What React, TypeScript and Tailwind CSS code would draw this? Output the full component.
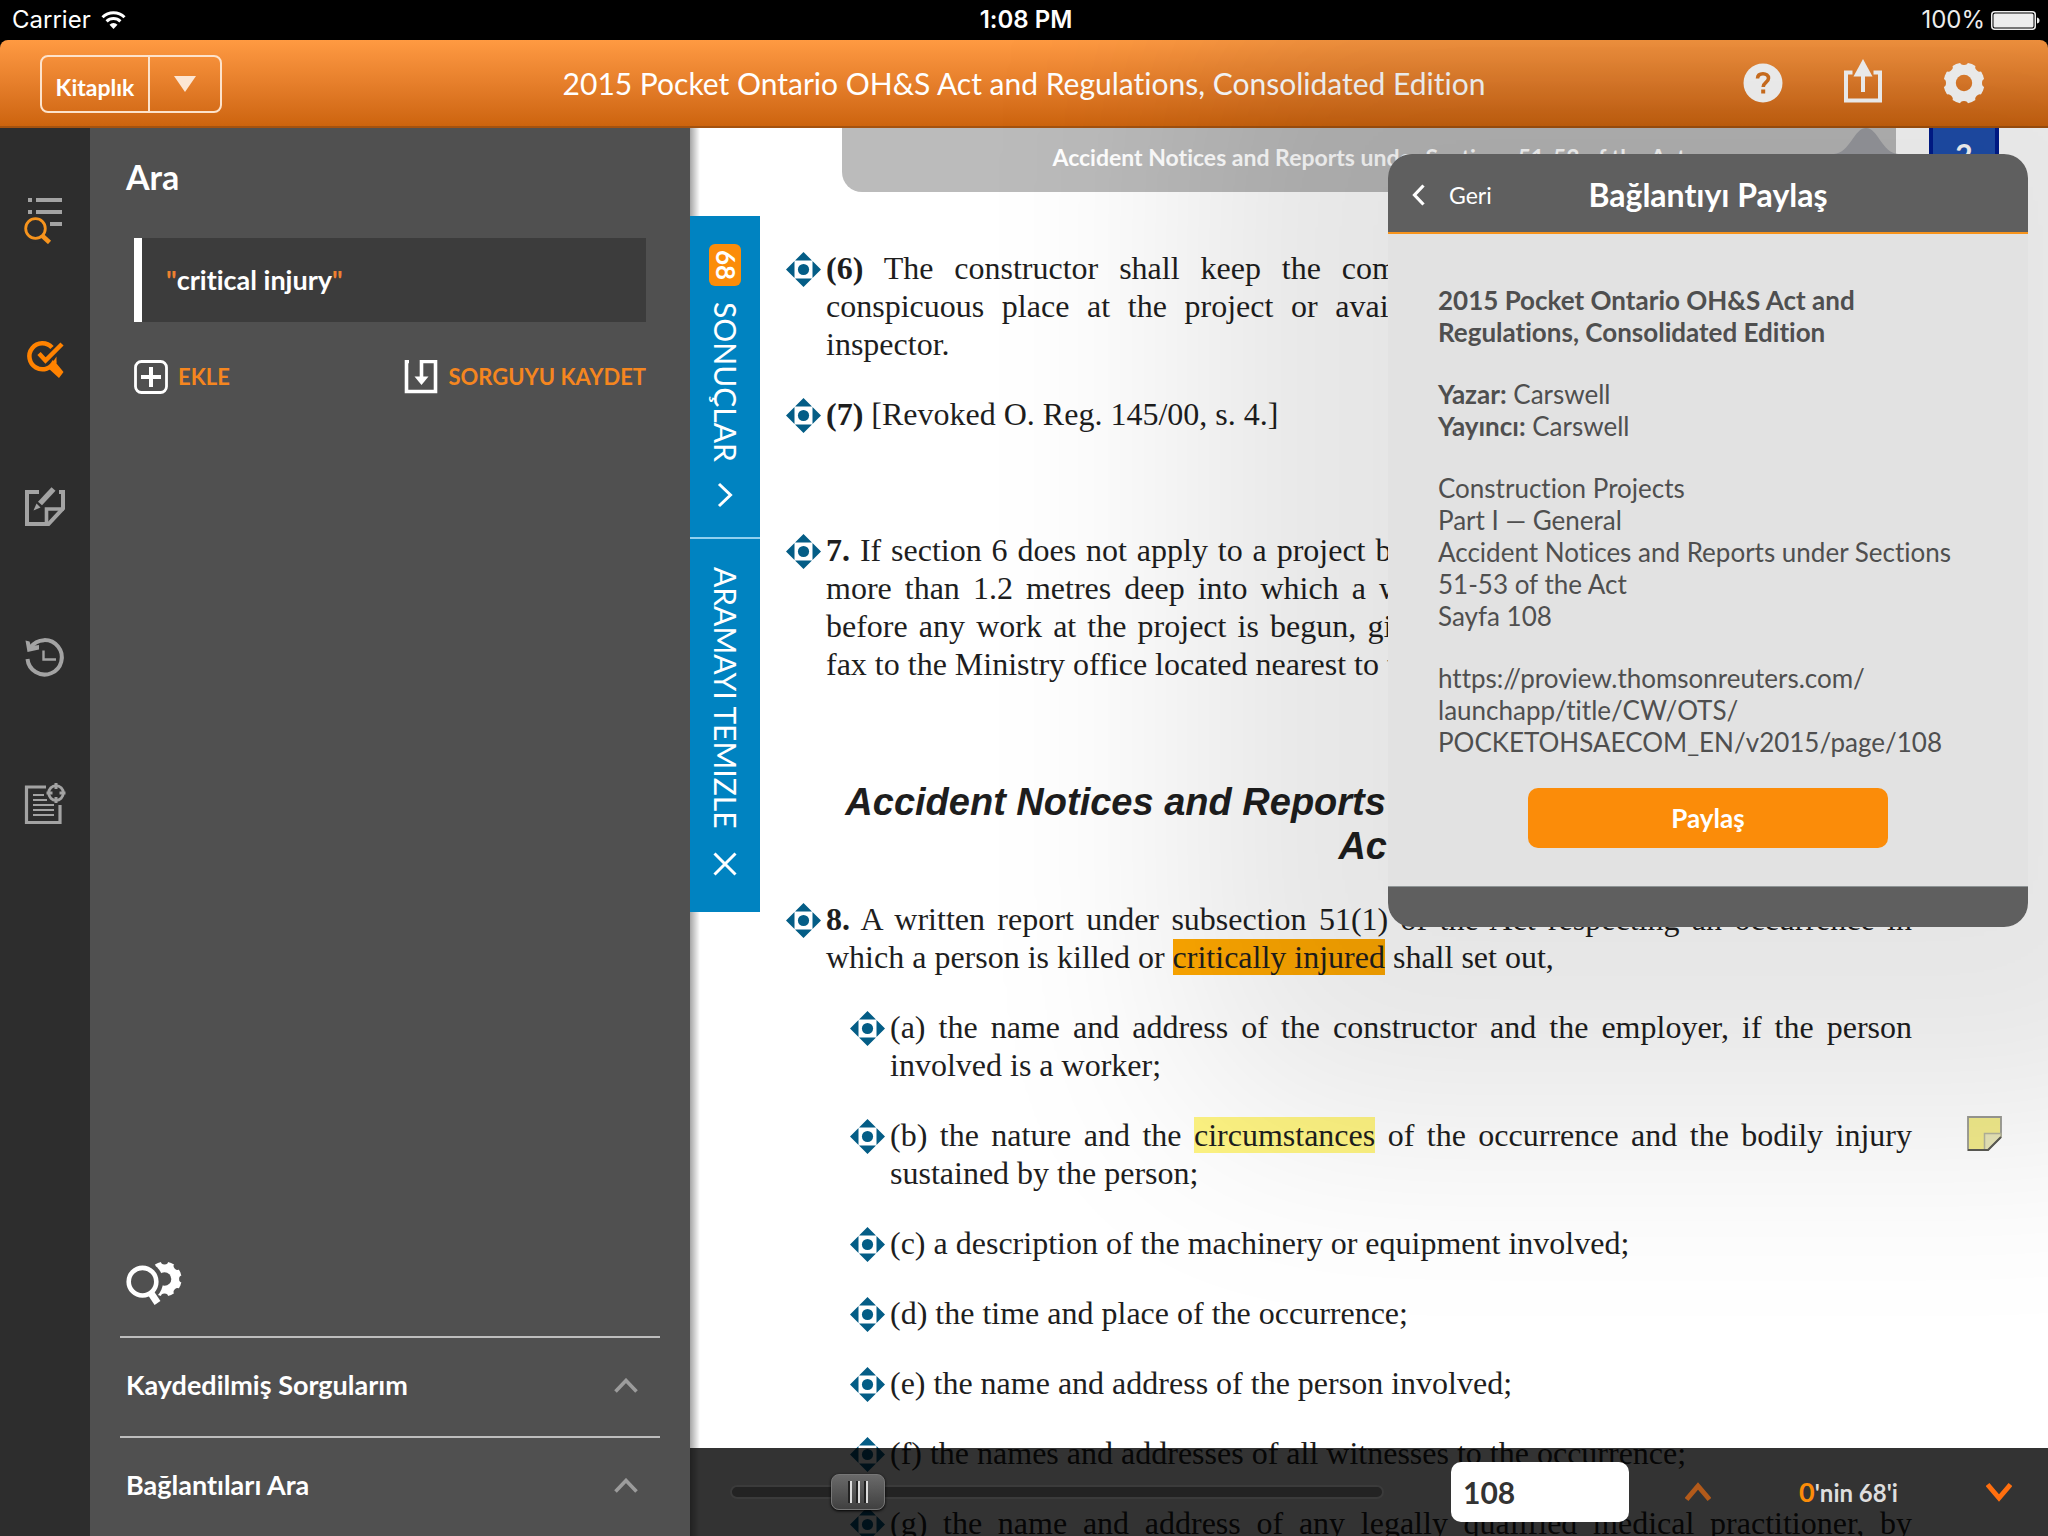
import type { ReactNode } from "react";
import { useState } from "react";
import clsx from "clsx";

function StatusBar() {
  return (
    <div className="grid h-10 shrink-0 grid-cols-3 items-center bg-black pr-2 pl-3 font-['Inter',sans-serif] text-2xl leading-8 text-white">
      <div className="flex items-center gap-2.5">
        <span>Carrier</span>
        <svg width="25" height="18" viewBox="0 0 25 18" fill="none">
          <path d="M1.5 6.2a15.6 15.6 0 0 1 22 0" stroke="#fff" strokeWidth="3" />
          <path d="M5.6 10.4a9.8 9.8 0 0 1 13.8 0" stroke="#fff" strokeWidth="3" />
          <path d="M12.5 18l-4-4.3a5.8 5.8 0 0 1 8 0z" fill="#fff" />
        </svg>
      </div>
      <p className="text-center font-semibold">1:08 PM</p>
      <div className="flex items-center justify-end gap-1.5">
        <span>100%</span>
        <svg width="49" height="19" viewBox="0 0 49 19" fill="none">
          <rect x="0.75" y="0.75" width="43.5" height="17.5" rx="3" stroke="#fff" strokeWidth="1.5" />
          <rect x="2.5" y="2.5" width="40" height="14" rx="1.5" fill="#fff" />
          <path d="M46 6.5c2 .5 2.5 1.5 2.5 3s-.5 2.5-2.5 3z" fill="#fff" />
        </svg>
      </div>
    </div>
  );
}

// Disc with eight notches round the rim and a hole in the middle
function GearIcon() {
  return (
    <svg width="42" height="42" viewBox="-21 -21 42 42">
      <mask id="gear-cut">
        <circle r="20.5" fill="#fff" />
        <circle r="8.2" fill="#000" />
        {[0, 45, 90, 135, 180, 225, 270, 315].map((deg) => (
          <ellipse key={deg} cy="-21.2" rx="4" ry="3.2" fill="#000" transform={`rotate(${deg})`} />
        ))}
      </mask>
      <rect x="-21" y="-21" width="42" height="42" fill="currentColor" mask="url(#gear-cut)" />
    </svg>
  );
}

function TopBar() {
  return (
    <div className="shrink-0 bg-black">
      <header className="grid h-[88px] grid-cols-[1fr_auto_1fr] items-center rounded-t-lg border-b-2 border-[#a4520f] bg-linear-to-b from-[#ff9a42] to-[#cd640d] px-10">
        <div className="mt-0.5 flex h-[58px] w-[182px] rounded-lg border-2 border-[#fde3cc] text-white">
          <button type="button" className="w-[106px] pt-1.5 text-[23px] font-bold">
            Kitaplık
          </button>
          <button
            type="button"
            aria-label="Kitaplık menüsü"
            className="flex flex-1 items-center justify-center border-l-2 border-[#fde3cc]"
          >
            <svg width="22" height="16" viewBox="0 0 22 16">
              <path d="M0 0h22L11 16z" fill="#fce6d4" />
            </svg>
          </button>
        </div>

        <h1 className="text-[30px] text-white">
          2015 Pocket Ontario OH&amp;S Act and Regulations, Consolidated Edition
        </h1>

        <div className="flex items-center justify-end gap-[60px] pr-[23px] text-white">
          <button type="button" aria-label="Yardım">
            <svg width="40" height="40" viewBox="0 0 40 40" fill="none">
              <circle cx="20" cy="20" r="19.5" fill="currentColor" />
              <path
                d="M14.5 15.5c.2-3.2 2.4-4.7 5.5-4.7s5.5 1.7 5.5 4.5c0 4.2-5.3 4-5.3 8.7"
                stroke="#d87420"
                strokeWidth="3.6"
              />
              <rect x="18.2" y="26.5" width="4" height="4" fill="#d87420" />
            </svg>
          </button>
          <button type="button" aria-label="Paylaş">
            <svg width="40" height="48" viewBox="0 0 40 48" fill="none">
              <path d="M9.5 13.5H3v28h34v-28h-6.5" stroke="currentColor" strokeWidth="4" />
              <path d="M20 33V14" stroke="currentColor" strokeWidth="4" />
              <path d="M20 0l9.5 17.5h-19z" fill="currentColor" />
            </svg>
          </button>
          <button type="button" aria-label="Ayarlar">
            <GearIcon />
          </button>
        </div>
      </header>
    </div>
  );
}

function RailButton({ label, children }: { label: string; children: ReactNode }) {
  return (
    <button
      type="button"
      aria-label={label}
      className="flex h-[147px] items-center justify-center text-[#a3a3a3]"
    >
      <svg width="48" height="60" viewBox="0 0 48 60" fill="none">
        {children}
      </svg>
    </button>
  );
}

function Rail() {
  return (
    <nav className="flex w-[90px] shrink-0 flex-col bg-[#2d2d2d] pt-3">
      <RailButton label="İçindekiler">
        <path d="M7 16h4M15 16h26M7 28h4M15 28h26M29 40h12" stroke="currentColor" strokeWidth="4" />
        <circle cx="15" cy="45" r="13.5" fill="#2d2d2d" />
        <circle cx="14.5" cy="44.5" r="9.8" stroke="#f7941d" strokeWidth="2.8" />
        <path d="M21 51.5l7.5 7" stroke="#f7941d" strokeWidth="4.5" />
      </RailButton>
      <RailButton label="Ara">
        <path d="M31 16.5A13 13 0 1 0 33.5 30" stroke="#ff8200" strokeWidth="4.5" />
        <path d="M18 22.5l6.5 7L41 13" stroke="#ff8200" strokeWidth="4.5" />
        <path d="M35.5 25.5v7l7 8.5-4.5 6-10.5-9.5z" fill="#ff8200" />
      </RailButton>
      <RailButton label="Notlar">
        <path d="M18 14H6v32h21.5L42 30.5V14h-4" stroke="currentColor" strokeWidth="4" />
        <path d="M25.5 47V31H43" stroke="currentColor" strokeWidth="3.6" />
        <path d="M32.5 11L19 25.5" stroke="currentColor" strokeWidth="5.5" />
        <path d="M15.5 25.5l4 4-7 3z" fill="currentColor" />
      </RailButton>
      <RailButton label="Geçmiş">
        <path d="M9.5 22.5A17.2 17.2 0 1 1 6.5 34" stroke="currentColor" strokeWidth="4" />
        <path d="M4.5 15.5l4 1 1.5 4.5 8-1v4.5L6.5 27z" fill="currentColor" />
        <path d="M22.5 25.5v9H35" stroke="currentColor" strokeWidth="2.4" />
      </RailButton>
      <RailButton label="Belge">
        <path d="M25 15H5.5v35.5H39V33" stroke="currentColor" strokeWidth="3.2" />
        <path
          d="M12 23h11M12 28h14M12 33h21M12 38h21M12 43h21"
          stroke="currentColor"
          strokeWidth="2"
        />
        <circle cx="35" cy="21" r="7.3" stroke="currentColor" strokeWidth="2.8" />
        <path d="M35 11v6M35 25v6M25.5 21h6M38.5 21h6" stroke="currentColor" strokeWidth="3" />
      </RailButton>
    </nav>
  );
}

function SectionRow({ label }: { label: string }) {
  return (
    <button
      type="button"
      className="flex h-[100px] w-full items-center justify-between border-t-2 border-[#bdbdbd] pr-[22px] pb-1 pl-1.5 text-[27px] font-bold text-white"
    >
      {label}
      <svg width="24" height="15" viewBox="0 0 24 15" fill="none">
        <path d="M1.5 13.5L12 2.5l10.5 11" stroke="#9c9c9c" strokeWidth="3.6" />
      </svg>
    </button>
  );
}

function SearchPanel() {
  return (
    <aside className="flex w-[600px] shrink-0 flex-col bg-[#505050]">
      <div className="px-[44px] pt-[27px]">
        <h2 className="-ml-2 text-[34px] leading-[44px] font-bold text-white">Ara</h2>
        <div className="mt-[39px] flex h-[84px] items-center border-l-8 border-white bg-[#3c3c3c] pl-6 text-[27px] font-bold text-white">
          <span className="text-[#ee8030]">"</span>critical injury
          <span className="text-[#ee8030]">"</span>
        </div>
        <div className="mt-[37px] flex items-center justify-between text-[22px] leading-9 font-bold text-[#f5861f]">
          <button type="button" className="flex items-center gap-2.5">
            <svg width="34" height="34" viewBox="0 0 34 34" fill="none">
              <rect x="1.5" y="1.5" width="31" height="31" rx="6" stroke="#fff" strokeWidth="2.8" />
              <path d="M17 7v20M7 17h20" stroke="#fff" strokeWidth="4" />
            </svg>
            EKLE
          </button>
          <button type="button" className="flex items-center gap-2.5">
            <svg width="34" height="34" viewBox="0 0 34 34" fill="none">
              <path d="M5 1.5H2.5v30h29v-30H17.5V18" stroke="#fff" strokeWidth="3.6" />
              <path d="M10.5 16.5h14L17.5 25z" fill="#fff" />
            </svg>
            SORGUYU KAYDET
          </button>
        </div>
      </div>

      <div className="mt-auto px-[30px]">
        <button type="button" aria-label="Arama ayarları" className="mb-[29px] ml-1.5 block">
          <svg width="56" height="46" viewBox="0 0 56 46" fill="none">
            <mask id="search-gear-cut">
              <circle cx="38.5" cy="18" r="17.2" fill="#fff" />
              <circle cx="38.5" cy="18" r="6.8" fill="#000" />
              <circle cx="16.5" cy="20.7" r="20.5" fill="#000" />
              {[0, 45, 90, 135, 180, 315].map((deg) => (
                <ellipse
                  key={deg}
                  cx="38.5"
                  cy="0.2"
                  rx="3.6"
                  ry="3.2"
                  fill="#000"
                  transform={`rotate(${deg} 38.5 18)`}
                />
              ))}
            </mask>
            <rect width="56" height="46" fill="#fff" mask="url(#search-gear-cut)" />
            <circle cx="16.5" cy="20.7" r="13.8" stroke="#fff" strokeWidth="4.6" />
            <path d="M24.5 31.5l7 10.5" stroke="#fff" strokeWidth="7" />
          </svg>
        </button>
        <SectionRow label="Kaydedilmiş Sorgularım" />
        <SectionRow label="Bağlantıları Ara" />
      </div>
    </aside>
  );
}

function Marker() {
  return (
    <svg className="mt-[3px] shrink-0" width="35" height="35" viewBox="0 0 35 35" fill="#045d86">
      <path d="M17.5 0l8.5 8.5H9zM17.5 35L9 26.5h17zM0 17.5L8.5 9v17zM35 17.5L26.5 26V9z" />
      <circle cx="17.5" cy="17.5" r="5.6" />
    </svg>
  );
}

function Clause({
  nested,
  note,
  children,
}: {
  nested?: boolean;
  note?: boolean;
  children: ReactNode;
}) {
  return (
    <div className={clsx("relative flex gap-[5px]", nested && "ml-16")}>
      <Marker />
      <p className="flex-1 text-justify">{children}</p>
      {note && (
        <svg
          className="absolute top-0 -right-[90px]"
          width="35"
          height="35"
          viewBox="0 0 35 35"
          fill="none"
        >
          <path d="M1 1h33v20L21 34H1z" fill="#f3ec8c" stroke="#9a9a94" strokeWidth="1.8" />
          <path d="M17.5 34V17.5H34V21L21 34z" fill="#e9e6b8" stroke="#b5b59c" strokeWidth="1.5" />
          <path d="M34 21L21 34H1" stroke="#5b5b55" strokeWidth="2" />
        </svg>
      )}
    </div>
  );
}

function Document() {
  return (
    <article className="flex flex-col gap-8 pt-[121px] pr-[136px] pl-24 font-['Liberation_Serif',serif] text-[32px] leading-[38px] text-[#1e1e1e]">
      <Clause>
        <b>(6)</b> The constructor shall keep the completed notification form posted in a
        conspicuous place at the project or available at the project for review by an inspector.
      </Clause>
      <Clause>
        <b>(7)</b> [Revoked O. Reg. 145/00, s. 4.]
      </Clause>
      <div className="pt-[66px]">
        <Clause>
          <b>7.</b> If section 6 does not apply to a project but the project includes work on a
          trench more than 1.2 metres deep into which a worker may enter, the constructor shall,
          before any work at the project is begun, give notice in person, by telephone or by fax to
          the Ministry office located nearest to the project.
        </Clause>
      </div>
      <h3 className="pt-[65px] pl-10 text-center font-['Liberation_Sans',sans-serif] text-[38px] leading-[44px] font-bold italic">
        Accident Notices and Reports under Sections 51-53 of the Act
      </h3>
      <Clause>
        <b>8.</b> A written report under subsection 51(1) of the Act respecting an occurrence in
        which a person is killed or <mark className="bg-[#ffa800] text-inherit">critically injured</mark>{" "}
        shall set out,
      </Clause>
      <Clause nested>
        (a) the name and address of the constructor and the employer, if the person involved is a
        worker;
      </Clause>
      <Clause nested note>
        (b) the nature and the <mark className="bg-[#fff583] text-inherit">circumstances</mark> of
        the occurrence and the bodily injury sustained by the person;
      </Clause>
      <Clause nested>(c) a description of the machinery or equipment involved;</Clause>
      <Clause nested>(d) the time and place of the occurrence;</Clause>
      <Clause nested>(e) the name and address of the person involved;</Clause>
      <Clause nested>(f) the names and addresses of all witnesses to the occurrence;</Clause>
      <Clause nested>
        (g) the name and address of any legally qualified medical practitioner, by whom the worker
        was or is being attended for the injury; and
      </Clause>
    </article>
  );
}

function SideTabs() {
  return (
    <div className="absolute top-[88px] left-0 flex w-[70px] flex-col bg-[#0083c1] text-[30px] text-white">
      <button
        type="button"
        className="flex h-[323px] flex-col items-center border-b-2 border-[#8fd0f0] pt-7"
      >
        <span className="flex h-[42px] w-8 items-center justify-center rounded-md bg-[#fb8c09] text-[26px] font-bold [writing-mode:vertical-rl]">
          68
        </span>
        <span className="mt-4 [writing-mode:vertical-rl]">SONUÇLAR</span>
        <svg className="mt-5" width="16" height="26" viewBox="0 0 16 26" fill="none">
          <path d="M2 2l11.5 11L2 24" stroke="#fff" strokeWidth="3" />
        </svg>
      </button>
      <button type="button" className="flex h-[373px] flex-col items-center pt-7">
        <span className="[writing-mode:vertical-rl]">ARAMAYI TEMIZLE</span>
        <svg className="mt-6" width="24" height="24" viewBox="0 0 24 24" fill="none">
          <path d="M1.5 1.5l21 21M22.5 1.5l-21 21" stroke="#fff" strokeWidth="3" />
        </svg>
      </button>
    </div>
  );
}

function SharePopover() {
  return (
    <section
      aria-label="Bağlantıyı Paylaş"
      className="absolute top-[26px] right-5 w-[640px] rounded-[24px] shadow-[0_0_220px_200px_rgba(0,0,0,0.1)]"
    >
      <svg
        className="absolute -top-[26px] right-[130px]"
        width="64"
        height="26"
        viewBox="0 0 64 26"
      >
        <path d="M0 26C16 25 20 0 32 0s16 25 32 26z" fill="#8c8d92" />
      </svg>
      <header className="grid h-20 grid-cols-[1fr_auto_1fr] items-center rounded-t-[24px] border-b-2 border-[#f7941d] bg-[#5f5f5f] px-6 pt-1 text-white">
        <button type="button" className="flex items-center gap-6 text-[23px]">
          <svg width="13" height="22" viewBox="0 0 13 22" fill="none">
            <path d="M11.5 1.5L2.5 11l9 9.5" stroke="#fff" strokeWidth="3.2" />
          </svg>
          Geri
        </button>
        <h2 className="text-[32px] font-bold">Bağlantıyı Paylaş</h2>
      </header>
      <div className="flex h-[652px] flex-col gap-[30px] bg-[#e2e2e2] px-[50px] pt-[50px] text-[26px] leading-8 text-[#4f4f4f]">
        <p className="font-bold">
          2015 Pocket Ontario OH&amp;S Act and
          <br />
          Regulations, Consolidated Edition
        </p>
        <p>
          <b>Yazar:</b> Carswell
          <br />
          <b>Yayıncı:</b> Carswell
        </p>
        <p>
          Construction Projects
          <br />
          Part I — General
          <br />
          Accident Notices and Reports under Sections
          <br />
          51-53 of the Act
          <br />
          Sayfa 108
        </p>
        <p>
          https://proview.thomsonreuters.com/
          <br />
          launchapp/title/CW/OTS/
          <br />
          POCKETOHSAECOM_EN/v2015/page/108
        </p>
        <button
          type="button"
          className="h-[60px] w-[360px] shrink-0 self-center rounded-[10px] bg-[#fb8c09] font-bold text-white"
        >
          Paylaş
        </button>
      </div>
      <footer className="h-[41px] rounded-b-[24px] border-t border-[#8f9596] bg-[#5f5f5f]" />
    </section>
  );
}

function PageBar() {
  const [page, setPage] = useState(108);

  return (
    <div className="absolute inset-x-0 bottom-0 flex h-[88px] items-center bg-black/80 pr-9 pl-10">
      <input
        type="range"
        aria-label="Sayfa konumu"
        min={1}
        max={646}
        value={page}
        onChange={(e) => setPage(Number(e.target.value))}
        className="h-9 w-[654px] appearance-none bg-transparent [&::-webkit-slider-runnable-track]:h-3.5 [&::-webkit-slider-runnable-track]:rounded-full [&::-webkit-slider-runnable-track]:border-2 [&::-webkit-slider-runnable-track]:border-[#3b3b3b] [&::-webkit-slider-runnable-track]:bg-[#232323] [&::-webkit-slider-thumb]:-mt-[13px] [&::-webkit-slider-thumb]:h-9 [&::-webkit-slider-thumb]:w-[54px] [&::-webkit-slider-thumb]:appearance-none [&::-webkit-slider-thumb]:rounded-lg [&::-webkit-slider-thumb]:border [&::-webkit-slider-thumb]:border-[#777] [&::-webkit-slider-thumb]:bg-[repeating-linear-gradient(90deg,#222_0px,#222_2px,#ddd_2px,#ddd_4px,transparent_4px,transparent_8px),linear-gradient(#6a6a6a,#404040)] [&::-webkit-slider-thumb]:bg-[length:20px_22px,100%_100%] [&::-webkit-slider-thumb]:bg-[position:center,center] [&::-webkit-slider-thumb]:bg-no-repeat [&::-webkit-slider-thumb]:shadow-[0_1px_3px_#000]"
      />
      <input
        type="text"
        aria-label="Sayfa"
        value={page}
        onChange={(e) => setPage(Number(e.target.value) || 1)}
        className="ml-[67px] h-[60px] w-[178px] rounded-[10px] bg-white px-3 text-[30px] font-bold text-[#333]"
      />
      <div className="flex flex-1 items-center justify-between pl-14 text-[#dedede]">
        <button type="button" aria-label="Önceki sonuç">
          <svg width="26" height="20" viewBox="0 0 26 20" fill="none">
            <path d="M1.5 17.5L13 4l11.5 13.5" stroke="#b35a1a" strokeWidth="5" />
          </svg>
        </button>
        <p className="text-2xl font-bold">
          <span className="text-[27px] text-[#fb8c09]">0</span>'nin 68'i
        </p>
        <button type="button" aria-label="Sonraki sonuç">
          <svg width="26" height="20" viewBox="0 0 26 20" fill="none">
            <path d="M1.5 2.5L13 16 24.5 2.5" stroke="#ff6f0f" strokeWidth="5" />
          </svg>
        </button>
      </div>
    </div>
  );
}

export default function App() {
  return (
    <div className="flex h-screen flex-col overflow-hidden bg-white font-['Lato',sans-serif] [font-variant-ligatures:none]">
      <StatusBar />
      <TopBar />
      <div className="flex min-h-0 flex-1">
        <Rail />
        <SearchPanel />
        <main className="relative min-w-0 flex-1">
          <div className="h-full overflow-hidden">
            <Document />
          </div>

          {/* Chapter caption and ribbon hanging from the top edge */}
          <div className="absolute top-0 right-[152px] left-[152px] flex h-16 items-center justify-center rounded-b-[20px] bg-[#bbbbbb] pb-1.5 text-[23px] font-bold text-white">
            Accident Notices and Reports under Sections 51-53 of the Act
          </div>
          <div className="absolute top-0 right-[49px] h-16 w-[70px] border-x-4 border-[#001c90] bg-[#1f4fae] pt-2 text-center text-[30px] leading-9 font-bold text-white">
            2
          </div>

          <SharePopover />
          <div className="absolute inset-y-0 left-0 w-2.5 bg-linear-to-r from-black/35 to-transparent" />
          <SideTabs />
          <PageBar />
        </main>
      </div>
    </div>
  );
}
